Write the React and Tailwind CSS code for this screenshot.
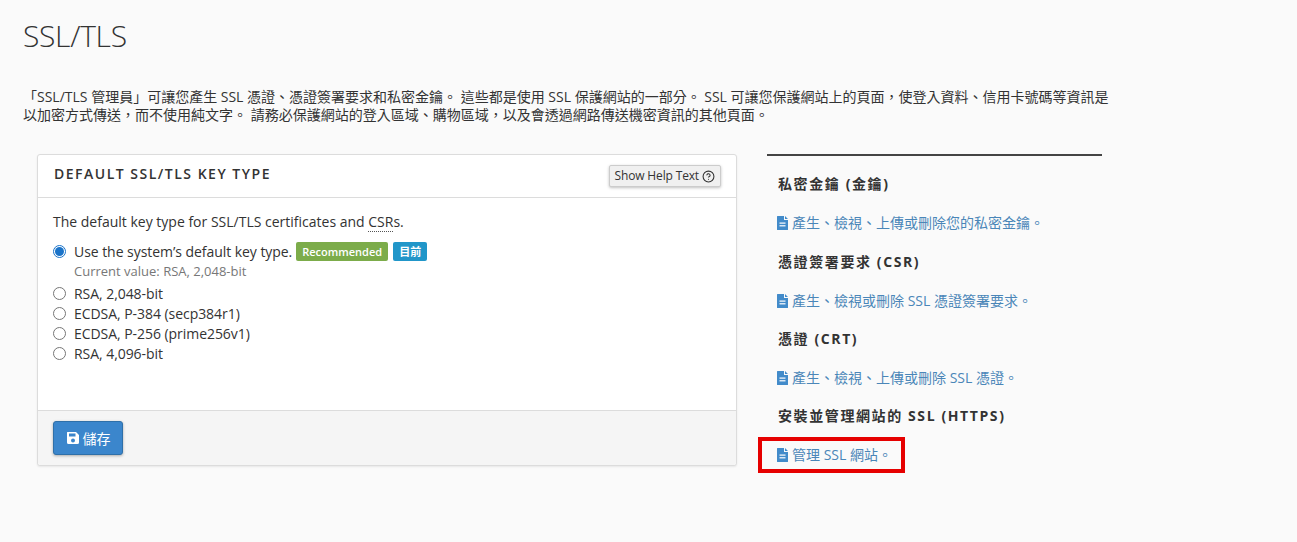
import { CircleHelp } from 'lucide-react';

const FONT = "font-['Open_Sans','Noto_Sans_CJK_TC',sans-serif]";

const intro = '「SSL/TLS 管理員」可讓您產生 SSL 憑證、憑證簽署要求和私密金鑰。 這些都是使用 SSL 保護網站的一部分。 SSL 可讓您保護網站上的頁面\uFF0C使登入資料、信用卡號碼等資訊是以加密方式傳送\uFF0C而不使用純文字。 請務必保護網站的登入區域、購物區域\uFF0C以及會透過網路傳送機密資訊的其他頁面。';

const options = ['RSA, 2,048-bit', 'ECDSA, P-384 (secp384r1)', 'ECDSA, P-256 (prime256v1)', 'RSA, 4,096-bit'];

const sections = [
    { title: '私密金鑰 (金鑰)', link: '產生、檢視、上傳或刪除您的私密金鑰。', spacing: 'pt-[19px]' },
    { title: '憑證簽署要求 (CSR)', link: '產生、檢視或刪除 SSL 憑證簽署要求。', spacing: 'pt-[21px]' },
    { title: '憑證 (CRT)', link: '產生、檢視、上傳或刪除 SSL 憑證。', spacing: 'pt-[20px]' },
    { title: '安裝並管理網站的 SSL (HTTPS)', link: '管理 SSL 網站。', spacing: 'pt-[20px]', marked: true },
];

function FileIcon() {
    return (
        <svg width="11" height="14" viewBox="0 0 11 14" className="shrink-0">
            <path d="M0.5 0H7V4H11V13.5A0.5 0.5 0 0 1 10.5 14H0.5A0.5 0.5 0 0 1 0 13.5V0.5A0.5 0.5 0 0 1 0.5 0ZM8 0L11 3H8Z" fill="#428bca" />
            <rect x="2.5" y="6.5" width="6" height="1.2" fill="#fff" />
            <rect x="2.5" y="9.2" width="6" height="1.2" fill="#fff" />
        </svg>
    );
}

function SaveIcon() {
    return (
        <svg width="14" height="14" viewBox="0 0 14 14" className="shrink-0">
            <path fillRule="evenodd" d="M1.5 1H10L13 4V11.5A1.5 1.5 0 0 1 11.5 13H2.5A1.5 1.5 0 0 1 1 11.5V1.5Q1 1 1.5 1ZM3 2.5V5.5H9.5V2.5ZM7 7.5A2 2 0 1 0 7 11.5A2 2 0 1 0 7 7.5Z" fill="#fff" />
        </svg>
    );
}

export default function App() {
    return (
        <div className={`${FONT} h-[542px] overflow-hidden bg-[#fafafa] text-[#333] text-[14px] pl-[23px]`}>
            <h1 className="pt-[15px] text-[30px] leading-[41px] font-light tracking-[-0.3px] text-[#333]">SSL/TLS</h1>

            <p className="mt-[32px] w-[1090px] text-[14px] leading-[18px] text-[#333]">{intro}</p>

            <div className="mt-[30px] ml-[14px] flex items-start gap-[30px]">
                <div className="w-[700px] h-[312px] flex flex-col rounded-[3px] border border-[#dcdcdc] bg-white shadow-[0_1px_2px_rgba(0,0,0,0.08)]">
                    <div className="h-[43px] flex justify-between border-b border-[#dcdcdc] px-[15px]">
                        <h2 className="pt-[10px] pl-[1px] text-[14px] leading-[18px] font-semibold tracking-[1.5px] text-[#333]">DEFAULT SSL/TLS KEY TYPE</h2>
                        <button className="mt-[10px] h-[22px] flex items-center gap-[3px] rounded-[2px] border border-[#ccc] bg-[#f0f0f0] px-[5px] text-[12px] tracking-[-0.15px] text-[#333] shadow-[0_1px_3px_rgba(0,0,0,0.25)]">
                            Show Help Text <CircleHelp size={13} strokeWidth={2} />
                        </button>
                    </div>

                    <div className="flex-1 pl-[15px] pt-[15px]">
                        <p className="leading-[18px]">
                            The default key type for SSL/TLS certificates and <span className="border-b border-dotted border-[#555]">CSR</span>s.
                        </p>
                        <div className="mt-[11px] flex h-[18px] items-center">
                            <span className="flex h-[13px] w-[13px] items-center justify-center rounded-full border border-[#1a73c9] bg-white">
                                <span className="h-[9px] w-[9px] rounded-full bg-[#1a73c9]" />
                            </span>
                            <span className="ml-[8px] tracking-[-0.05px]">Use the system’s default key type.</span>
                            <span className="ml-[4px] h-[19px] rounded-[2px] bg-[#7cac4a] px-[6px] text-[11px] leading-[19px] font-semibold text-white">Recommended</span>
                            <span className="ml-[5px] h-[19px] rounded-[2px] bg-[#2196c9] px-[6px] text-[11px] leading-[19px] font-semibold text-white">目前</span>
                        </div>
                        <div className="ml-[21px] mt-[3px] text-[13px] leading-[17px] text-[#777]">Current value: RSA, 2,048-bit</div>
                        <div className="mt-[3px] flex flex-col">
                            {options.map((option) => (
                                <label key={option} className="flex h-[20px] items-center">
                                    <span className="h-[13px] w-[13px] rounded-full border border-[#767676] bg-white" />
                                    <span className="ml-[8px] tracking-[-0.05px]">{option}</span>
                                </label>
                            ))}
                        </div>
                    </div>

                    <div className="h-[55px] rounded-b-[3px] border-t border-[#dcdcdc] bg-[#f5f5f5] pl-[15px] pt-[10px]">
                        <button className="flex h-[34px] w-[70px] items-center justify-center gap-[3px] rounded-[3px] border border-[#2f70a9] bg-[#3b86cc] text-[14px] text-white shadow-[0_1px_3px_rgba(0,0,0,0.3)]">
                            <SaveIcon /> 儲存
                        </button>
                    </div>
                </div>

                <div className="w-[335px] border-t-2 border-[#444] pl-[10px]">
                    {sections.map((section) => (
                        <div key={section.title} className={section.spacing}>
                            <h3 className="pl-[1px] text-[14px] leading-[18px] font-bold tracking-[1.6px] text-[#333]">{section.title}</h3>
                            <a className="relative mt-[21px] flex w-fit items-center gap-[4px] leading-[18px] text-[#4a86b8]">
                                <FileIcon />
                                {section.link}
                                {section.marked && (
                                    <span className="absolute -left-[19px] -right-[13px] -top-[9px] -bottom-[9px] border-4 border-[#e60000]" />
                                )}
                            </a>
                        </div>
                    ))}
                </div>
            </div>
        </div>
    );
}
